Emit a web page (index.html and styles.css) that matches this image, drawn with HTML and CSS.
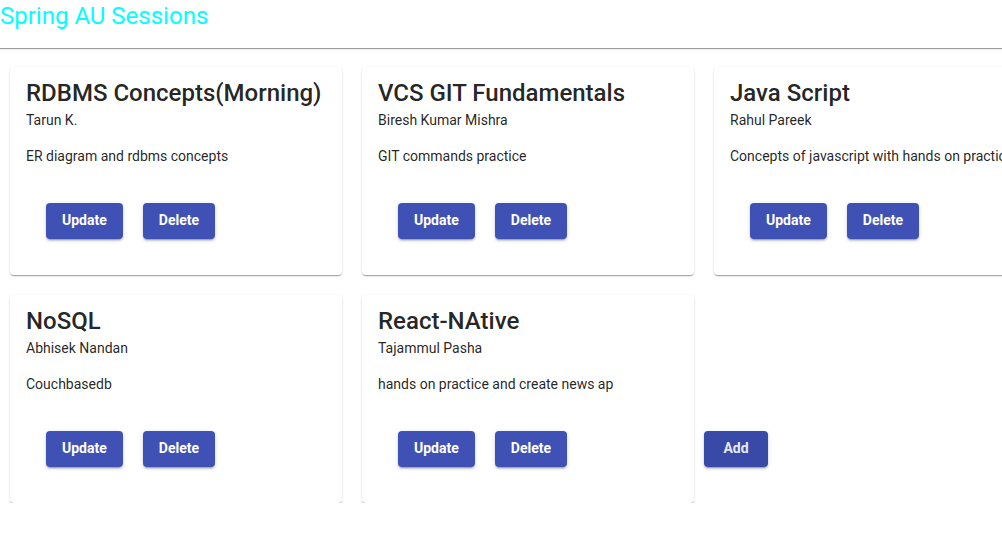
FILE: index.html
```html
<!DOCTYPE html>
<html>
<head>
<meta charset="utf-8">
<link rel="stylesheet" href="styles.css">
</head>
<body>
<div class="page-title">Spring AU Sessions</div>
<hr class="divider">
<div class="cards">
  <div class="card">
    <div class="card-title">RDBMS Concepts(Morning)</div>
    <div class="card-subtitle">Tarun K.</div>
    <div class="card-text">ER diagram and rdbms concepts</div>
    <div class="card-actions">
      <button class="btn">Update</button>
      <button class="btn">Delete</button>
    </div>
  </div>
  <div class="card">
    <div class="card-title">VCS GIT Fundamentals</div>
    <div class="card-subtitle">Biresh Kumar Mishra</div>
    <div class="card-text">GIT commands practice</div>
    <div class="card-actions">
      <button class="btn">Update</button>
      <button class="btn">Delete</button>
    </div>
  </div>
  <div class="card">
    <div class="card-title">Java Script</div>
    <div class="card-subtitle">Rahul Pareek</div>
    <div class="card-text">Concepts of javascript with hands on practice</div>
    <div class="card-actions">
      <button class="btn">Update</button>
      <button class="btn">Delete</button>
    </div>
  </div>
  <div class="card">
    <div class="card-title">NoSQL</div>
    <div class="card-subtitle">Abhisek Nandan</div>
    <div class="card-text">Couchbasedb</div>
    <div class="card-actions">
      <button class="btn">Update</button>
      <button class="btn">Delete</button>
    </div>
  </div>
  <div class="card">
    <div class="card-title">React-NAtive</div>
    <div class="card-subtitle">Tajammul Pasha</div>
    <div class="card-text">hands on practice and create news ap</div>
    <div class="card-actions">
      <button class="btn">Update</button>
      <button class="btn">Delete</button>
    </div>
  </div>
  <button class="btn btn-add">Add</button>
</div>
</body>
</html>
```
FILE: styles.css
```css
html, body {
  margin: 0;
  padding: 0;
  overflow: hidden;
  background: #fff;
  font-family: Roboto, "Noto Sans", Arial, sans-serif;
}

.page-title {
  font-size: 24px;
  line-height: 28px;
  font-weight: 400;
  color: #00ffff;
  margin: 2px 0 0 0;
}

.divider {
  margin: 18px 0 0 0;
  border: 0;
  border-top: 1px solid #9e9e9e;
  border-bottom: 1px solid #eeeeee;
  height: 0;
}

.cards {
  display: flex;
  flex-wrap: wrap;
  gap: 20px;
  width: 1056px;
  padding: 17px 10px 0 10px;
  box-sizing: border-box;
}

.card {
  width: 332px;
  height: 208px;
  box-sizing: border-box;
  background: #fff;
  border-radius: 4px;
  box-shadow: 0 2px 1px -1px rgba(0,0,0,0.2), 0 1px 1px 0 rgba(0,0,0,0.14), 0 1px 3px 0 rgba(0,0,0,0.12);
  padding: 10px 16px 0 16px;
  overflow: hidden;
  color: rgba(0,0,0,0.87);
}

.card-title {
  font-size: 24px;
  line-height: 32px;
  font-weight: 500;
  white-space: nowrap;
}

.card-subtitle {
  margin-top: 1px;
  font-size: 14px;
  line-height: 20px;
  white-space: nowrap;
}

.card-text {
  margin-top: 16px;
  font-size: 14px;
  line-height: 20px;
  white-space: nowrap;
}

.card-actions {
  display: flex;
  gap: 20px;
  margin-top: 37px;
  padding-left: 20px;
}

.btn {
  height: 36px;
  min-width: 64px;
  padding: 0 16px 1px 16px;
  border: 0;
  border-radius: 4px;
  background: #3f51b5;
  color: #fff;
  font-family: Roboto, "Noto Sans", Arial, sans-serif;
  font-size: 14px;
  font-weight: 700;
  line-height: 35px;
  box-shadow: 0 3px 1px -2px rgba(0,0,0,0.2), 0 2px 2px 0 rgba(0,0,0,0.14), 0 1px 5px 0 rgba(0,0,0,0.12);
  cursor: pointer;
}

.btn-add {
  align-self: flex-end;
  margin-bottom: 36px;
  margin-left: -10px;
  background: #3949a8;
  color: #e8e8f2;
}
```
